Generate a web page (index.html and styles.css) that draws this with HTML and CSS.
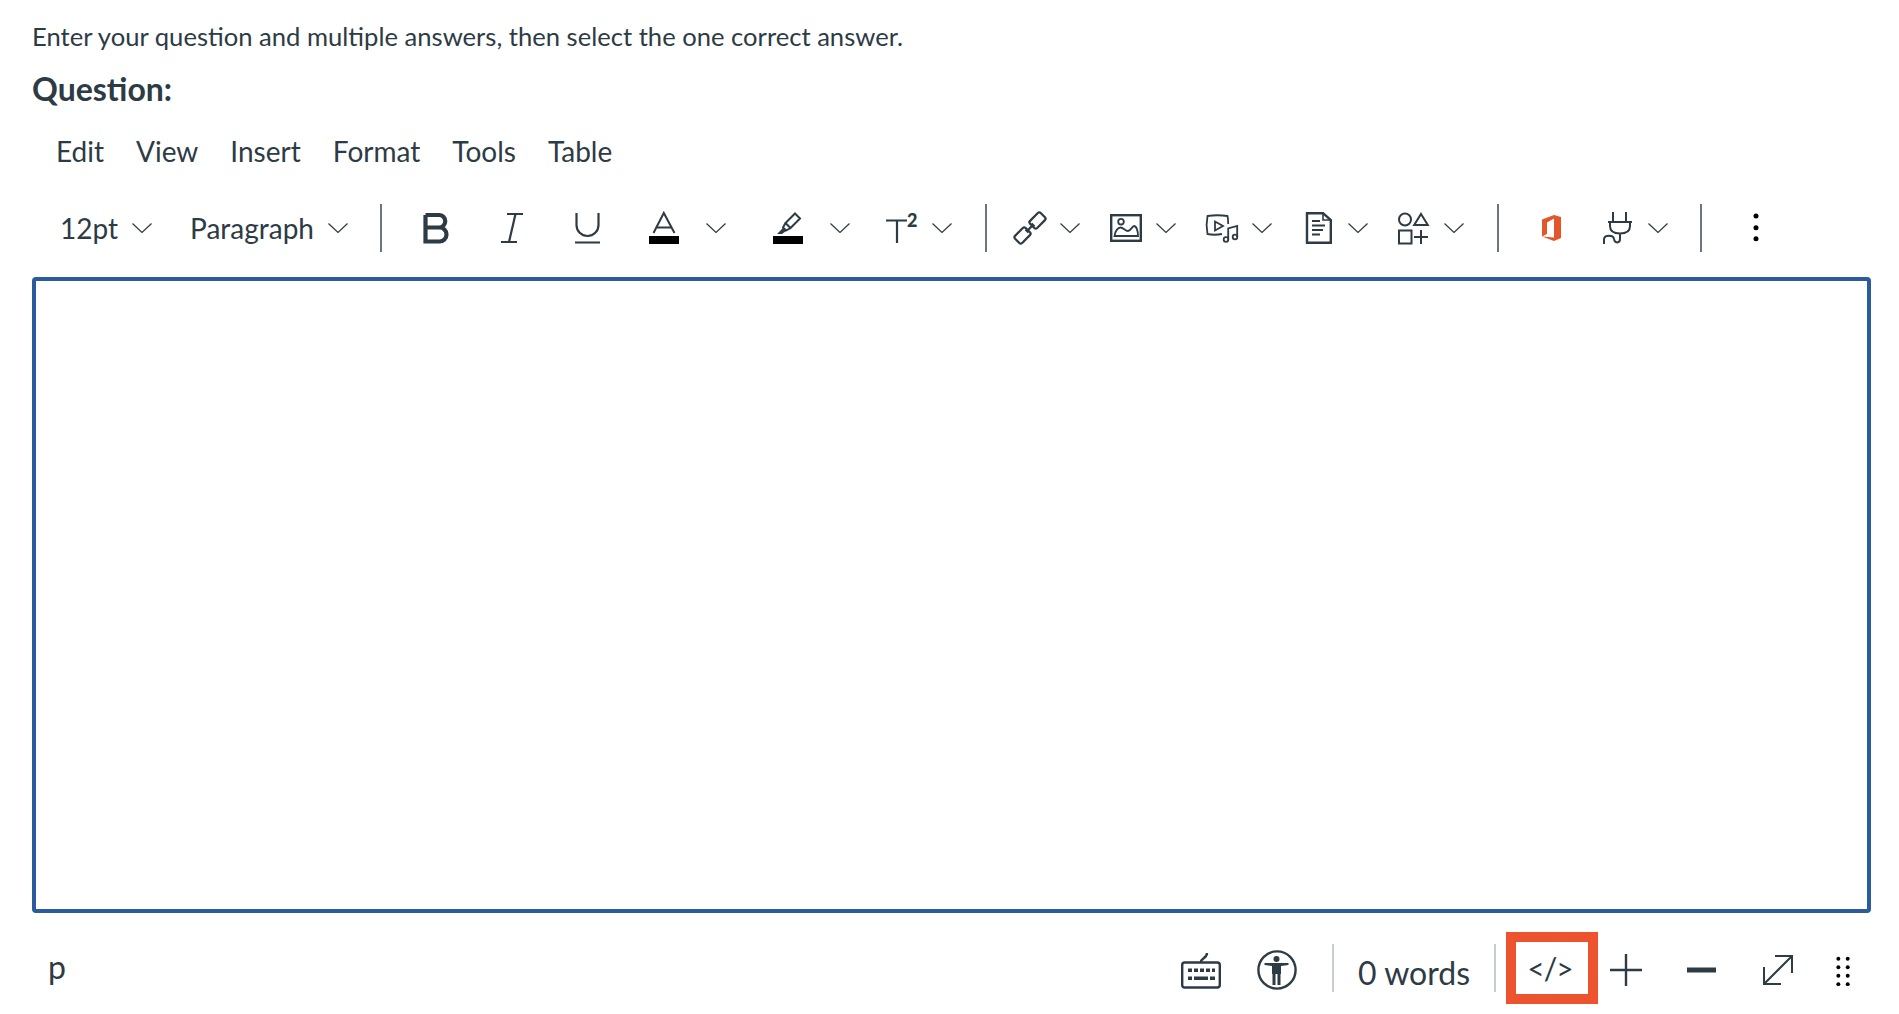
FILE: index.html
```html
<!DOCTYPE html>
<html lang="en">
<head>
<meta charset="utf-8">
<title>Question editor</title>
<link rel="stylesheet" href="styles.css">
</head>
<body>
<svg class="defs" width="0" height="0" aria-hidden="true">
  <symbol id="chev" viewBox="0 0 20 10"><path d="M.5.5 10 9.500 19.500.5" fill="none" stroke="#2d3b45" stroke-width="1.200"/></symbol>
</svg>
<main class="page">
  <p class="intro">Enter your question and multiple answers, then sele<span class="plain">ct</span> the one corre<span class="plain">ct</span> answer.</p>
  <h2 class="label">Question:</h2>
  <nav class="menu">
    <span>Edit</span><span>View</span><span>Insert</span><span>Format</span><span>Tools</span><span>Table</span>
  </nav>
  <div class="toolbar">
    <div class="select select-size"><span>12pt</span><svg class="chev"><use href="#chev"/></svg></div>
    <div class="select select-para"><span>Paragraph</span><svg class="chev"><use href="#chev"/></svg></div>
    <i class="sep sep-a"></i>
    <svg class="ico tight" viewBox="0 0 32 32"><path d="M5.500 3V29.500H19.500A7 7 0 0 0 19.500 15.500H5.500M19 15.500A6.200 6.200 0 0 0 19 3H5.500" fill="none" stroke="#2d3b45" stroke-width="4.200"/></svg>
    <svg class="ico tight" viewBox="0 0 32 32"><path d="M11 2H27M5 30H21M19.500 2 13 30" fill="none" stroke="#2d3b45" stroke-width="2.200"/></svg>
    <svg class="ico tight" viewBox="0 0 32 32"><path d="M4.500 1V13A11 11 0 0 0 26.500 13V1M3 30.500H28" fill="none" stroke="#2d3b45" stroke-width="2.200"/></svg>
    <div class="split wide">
      <svg class="ico" viewBox="0 0 32 32"><path d="M5.500 21 15.800 1 26.500 21M8.500 15.500H23" fill="none" stroke="#2d3b45" stroke-width="2"/><rect x="1" y="24" width="30" height="8"/></svg>
      <svg class="chev"><use href="#chev"/></svg>
    </div>
    <div class="split wide tight-next">
      <svg class="ico" viewBox="0 0 32 32"><path d="M23 1.500 28 6.500 18.500 16 13.500 11ZM13.500 11 11 15.500 14 18.500 18.500 16" fill="none" stroke="#2d3b45" stroke-width="2"/><path d="M11 16 14 19 10 22H5Z" fill="#2d3b45"/><rect x="1" y="24" width="30" height="8"/></svg>
      <svg class="chev"><use href="#chev"/></svg>
    </div>
    <div class="split last">
      <svg class="ico" viewBox="0 0 32 32"><path d="M0 8.500H21M11 8.500V31" fill="none" stroke="#2d3b45" stroke-width="2.200"/><text class="sup" x="21" y="14.500">2</text></svg>
      <svg class="chev"><use href="#chev"/></svg>
    </div>
    <i class="sep sep-b"></i>
    <div class="split">
      <svg class="ico" viewBox="0 0 32 32"><g fill="none" stroke="#2d3b45" stroke-width="2.200" stroke-linejoin="round"><rect x="16" y="3.500" width="15" height="10" rx="2" transform="rotate(-45 23.500 8.500)"/><rect x="1" y="18.500" width="15" height="10" rx="2" transform="rotate(-45 8.500 23.500)"/><path d="M11.500 17.500 14.500 20.500M17.500 11.500 20.500 14.500M12.500 19.500 19.500 12.500"/></g></svg>
      <svg class="chev"><use href="#chev"/></svg>
    </div>
    <div class="split">
      <svg class="ico" viewBox="0 0 32 32"><rect x="1.200" y="3.200" width="29.600" height="25.600" fill="none" stroke="#2d3b45" stroke-width="2.400"/><circle cx="11" cy="9.700" r="2.800" fill="none" stroke="#2d3b45" stroke-width="1.800"/><path d="M4.500 24C5 19 8 15.500 10.500 15.500 13.500 15.500 15 19 18 19 21 19 22 14 24 14 26.500 14 28 19 28 24Z" fill="none" stroke="#2d3b45" stroke-width="1.800"/></svg>
      <svg class="chev"><use href="#chev"/></svg>
    </div>
    <div class="split">
      <svg class="ico" viewBox="0 0 32 32"><g fill="none" stroke="#2d3b45" stroke-width="1.800"><path d="M16 22C11 23 6 23 1.500 22 .5 17 .5 9 1.500 4 8 3 15 3 21.500 4 22 6 22.200 9 22.200 12"/><path d="M9 9.500 17 14 9 18.500Z"/><circle cx="20" cy="27.500" r="2.300"/><circle cx="29" cy="25" r="2.300"/><path d="M22.200 27.500V16.500L31.200 14V25"/></g></svg>
      <svg class="chev"><use href="#chev"/></svg>
    </div>
    <div class="split">
      <svg class="ico" viewBox="0 0 32 32"><g fill="none" stroke="#2d3b45"><path d="M5 1.200H21L28.800 8V30.800H5Z" stroke-width="2.400"/><path d="M21 1.500V8H28.500" stroke-width="1.600"/><path d="M10 9H18M10 13.500H23M10 18H21M10 22.500H18" stroke-width="2"/></g></svg>
      <svg class="chev"><use href="#chev"/></svg>
    </div>
    <div class="split last-b">
      <svg class="ico" viewBox="0 0 32 32"><g fill="none" stroke="#2d3b45" stroke-width="2"><circle cx="7" cy="7.500" r="6"/><path d="M23 2 29.800 13H16.200Z"/><rect x="1" y="18.500" width="12.500" height="13"/><path d="M16 25H30M23 18V32"/></g></svg>
      <svg class="chev"><use href="#chev"/></svg>
    </div>
    <i class="sep sep-c"></i>
    <svg class="ico office" viewBox="0 0 32 32"><path fill-rule="evenodd" d="M6 7.500 18 3 25 5V26L18 29 6 24.500V7.500ZM11 10.500V22L6 24.500 18 25.500V6.500L11 10.500Z" fill="#e3562a"/></svg>
    <div class="split plug">
      <svg class="ico" viewBox="0 0 32 32"><path d="M11 0V10M24 0V10M6 10H30M8 10V14C8 19 12 21.500 18 21.500 24 21.500 28 19 28 14V10M18 21.500V27C18 31.500 12.500 31.500 12 27 11.500 22.500 2.500 22.500 2 27V32" fill="none" stroke="#2d3b45" stroke-width="2"/></svg>
      <svg class="chev"><use href="#chev"/></svg>
    </div>
    <i class="sep sep-d"></i>
    <svg class="ico more" viewBox="0 0 32 32"><circle cx="16" cy="4" r="2.500"/><circle cx="16" cy="15.700" r="2.500"/><circle cx="16" cy="26.700" r="2.500"/></svg>
  </div>
  <div class="editor"></div>
  <footer class="status">
    <span class="path">p</span>
    <div class="status-tools">
      <svg class="big" viewBox="0 0 40 40"><g fill="none" stroke="#2d3b45" stroke-width="2.400"><rect x="1.200" y="12.500" width="37.600" height="25" rx="2.500"/><path d="M20 12C20 8 26 8.500 26 3"/></g><path d="M7 18.500h4v3.500H7zM13 18.500h4v3.500h-4zM19 18.500h4v3.500h-4zM25 18.500h4v3.500h-4zM31 18.500h3v3.500h-3zM7 26.500h4v3.500H7zM13 26.500h14v3.500H13zM29 26.500h5v3.500h-5z" fill="#2d3b45"/></svg>
      <svg class="big access" viewBox="0 0 40 40"><circle cx="20" cy="20" r="18.600" fill="none" stroke="#2d3b45" stroke-width="2.400"/><circle cx="19.500" cy="9" r="3" fill="#2d3b45"/><path d="M7.500 13H31.500V15L24 16V24H15V16L7.500 15Z" fill="#2d3b45"/><path d="M15.500 22H23.500V35H20.500V24H18.500V35H15.500Z" fill="#2d3b45"/></svg>
      <i class="sep-light sep-e"></i>
      <span class="words">0 words</span>
      <i class="sep-light sep-f"></i>
      <div class="html-btn"><span>&lt;/&gt;</span></div>
      <svg class="ico step step-a" viewBox="0 0 32 32"><path d="M0 16H32M16 0V32" fill="none" stroke="#2d3b45" stroke-width="2.400"/></svg>
      <svg class="ico step step-a" viewBox="0 0 32 32"><path d="M1 16H30" fill="none" stroke="#2d3b45" stroke-width="5"/></svg>
      <svg class="ico step" viewBox="0 0 32 32"><path d="M2 30 30 2M13 2H30V19M2 13V30H19" fill="none" stroke="#2d3b45" stroke-width="2"/></svg>
      <svg class="grip" viewBox="0 0 16 32"><circle cx="2.500" cy="3" r="2.100"/><circle cx="12.500" cy="3" r="2.100"/><circle cx="2.500" cy="12" r="2.100"/><circle cx="12.500" cy="12" r="2.100"/><circle cx="2.500" cy="21" r="2.100"/><circle cx="12.500" cy="21" r="2.100"/><circle cx="2.500" cy="30" r="2.100"/><circle cx="12.500" cy="30" r="2.100"/></svg>
    </div>
  </footer>
</main>
</body>
</html>
```

FILE: styles.css
```css
* { box-sizing: border-box; }
html, body { margin: 0; height: 100%; background: #fff; overflow: hidden; }
body { font-family: Lato, "Open Sans", sans-serif; color: #2d3b45; font-feature-settings: "liga", "dlig"; }
.defs { position: absolute; }
.page { padding: 20px 28px 0 32px; }
.intro { margin: 0; font-size: 25.6px; line-height: 32px; }
.plain { font-feature-settings: "liga", "dlig" 0; }
.label { margin: 19px 0 0; font-size: 32px; font-weight: 700; line-height: 36px; }
.menu { display: flex; gap: 32px; padding-left: 24px; margin-top: 26px; font-size: 28px; line-height: 36px; }
.toolbar { display: flex; align-items: center; height: 48px; margin-top: 35px; padding-left: 28px; font-size: 28px; }
.select { display: flex; align-items: center; }
.select-size { gap: 14px; margin-right: 38px; }
.select-para { gap: 14px; margin-right: 32px; }
.chev { width: 20px; height: 10px; flex: none; }
.ico { width: 32px; height: 32px; flex: none; display: block; overflow: visible; }
.ico.tight { margin-right: 44px; }
.split { display: flex; align-items: center; gap: 14px; margin-right: 30px; }
.split.wide { gap: 26px; margin-right: 46px; }
.split.tight-next { margin-right: 36px; }
.split.last { margin-right: 33px; }
.split.last-b { margin-right: 33px; }
.sep { display: block; width: 2px; height: 48px; background: #6b7780; flex: none; }
.sep-a { margin-right: 38px; }
.sep-b { margin-right: 27px; }
.sep-c { margin-right: 37px; }
.sep-d { margin-right: 38px; }
.office { margin-right: 34px; }
.plug { margin-right: 32px; }
.sup { font-family: Lato, sans-serif; font-size: 18px; font-weight: 900; fill: #2d3b45; }
.editor { height: 636px; margin-top: 25px; border: 4px solid #2a5b9c; border-radius: 4px; background: #fff; }
.status { display: flex; align-items: center; justify-content: space-between; height: 72px; margin-top: 19px; padding: 0 20px 0 16px; }
.path { font-size: 32px; line-height: 36px; margin-top: -2px; }
.status-tools { display: flex; align-items: center; }
.big { width: 40px; height: 40px; flex: none; display: block; margin: 3px 36px 0 0; }
.access { margin-right: 35px; }
.sep-light { display: block; width: 2px; height: 48px; background: #c7cdd1; flex: none; }
.sep-e { margin-right: 24px; }
.sep-f { margin: 0 10px 0 24px; }
.words { font-size: 32px; line-height: 40px; margin-top: 10px; }
.html-btn { display: flex; align-items: center; justify-content: center; width: 92px; height: 72px; border: 10px solid #ec532e; font-size: 30px; letter-spacing: -1px; margin-right: 12px; padding-right: 4px; }
.step { margin: 3px 45px 0 0; }
.step-a { margin-right: 44px; }
.grip { width: 15px; height: 32px; flex: none; display: block; margin: 5px 0 0 -3px; }
```
